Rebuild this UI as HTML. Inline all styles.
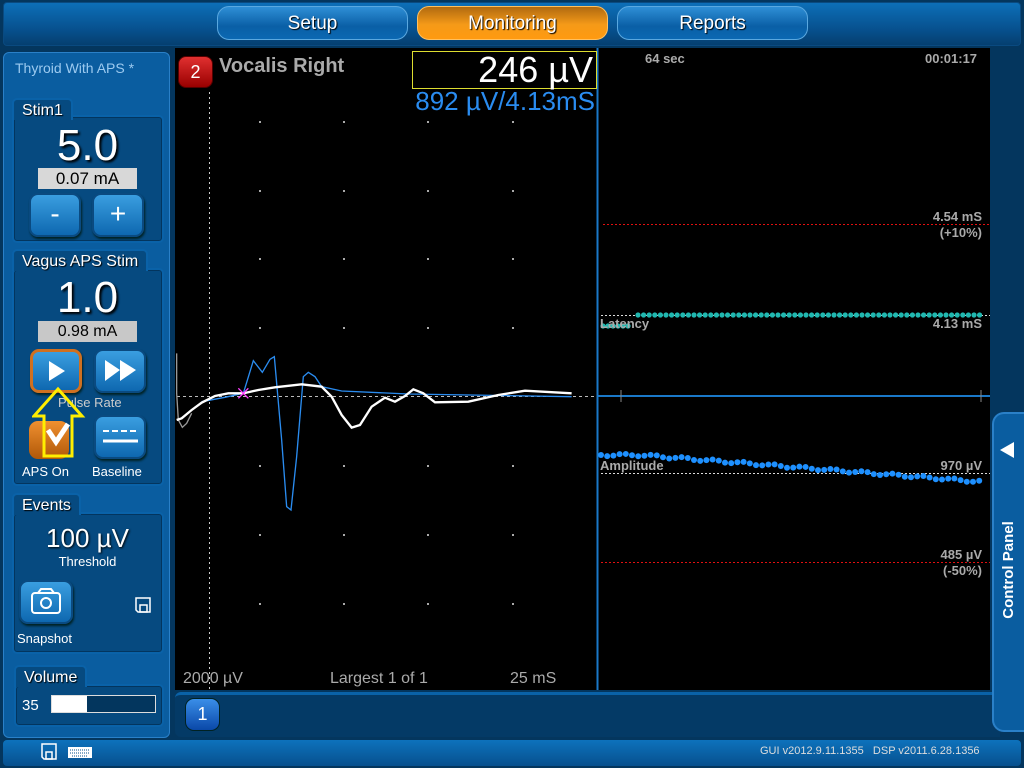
<!DOCTYPE html>
<html><head><meta charset="utf-8"><style>
*{margin:0;padding:0;box-sizing:border-box}
body{width:1024px;height:768px;background:#04365e;font-family:"Liberation Sans",sans-serif;position:relative;overflow:hidden;color:#fff}
.abs{position:absolute}
.topbar{left:3px;top:2px;width:1018px;height:44px;border-radius:4px;background:linear-gradient(#0d6fb8,#075290 60%,#053f70);border:1px solid #0a4a80}
.tab{top:6px;height:34px;width:191px;border-radius:12px;border:1px solid #5aa8e0;background:linear-gradient(#2f8fd6,#0a5fa6 60%,#0b68b2);text-align:center;font-size:19px;line-height:33px;text-shadow:1px 1px 1px #000}
.tab.on{background:linear-gradient(#b06a10,#f59a18 55%,#ff9a10);border-color:#ffc060}
.left{left:3px;top:52px;width:167px;height:686px;border-radius:6px;background:#0a5da0;border:1px solid #2a80c8}
.box{position:absolute;left:8px;width:152px;border-radius:5px;background:#064a80;border:2px solid #0a62a8;box-shadow:inset 0 0 0 1px #03355e}
.lbl{position:absolute;z-index:2;left:8px;height:22px;border-radius:5px 5px 0 0;background:#064a80;border:2px solid #0a62a8;border-bottom:none;font-size:16px;padding:2px 8px;text-shadow:1px 1px 1px #000}
.btn{position:absolute;width:52px;height:44px;border-radius:9px;background:linear-gradient(#3a9ee0,#0e68b0);border:2px solid #0a4a80;box-shadow:1px 2px 2px #022;text-align:center;color:#fff}
.plot{left:175px;top:48px;width:815px;height:642px;background:#000}
.gray{color:#aaa}
</style></head><body>
<div class="abs topbar"></div>
<div class="abs tab" style="left:217px">Setup</div>
<div class="abs tab on" style="left:417px">Monitoring</div>
<div class="abs tab" style="left:617px">Reports</div>

<div class="abs left">
 <div class="abs" style="left:11px;top:7px;font-size:14px;color:#9ccaf0">Thyroid With APS *</div>
 <div class="lbl" style="top:45px">Stim1</div>
 <div class="box" style="top:62px;height:128px"></div>
 <div class="abs" style="left:0;width:167px;top:68px;text-align:center;font-size:44px;text-shadow:2px 2px 2px #000">5.0</div>
 <div class="abs" style="left:34px;top:115px;width:99px;height:21px;background:#d8d8d8;color:#000;text-align:center;font-size:17px;line-height:21px">0.07 mA</div>
 <div class="btn" style="left:25px;top:140px;font-size:28px;line-height:38px">-</div>
 <div class="btn" style="left:88px;top:140px;font-size:28px;line-height:38px">+</div>

 <div class="lbl" style="top:196px">Vagus APS Stim</div>
 <div class="box" style="top:215px;height:218px"></div>
 <div class="abs" style="left:0;width:167px;top:220px;text-align:center;font-size:44px;text-shadow:2px 2px 2px #000">1.0</div>
 <div class="abs" style="left:34px;top:268px;width:99px;height:21px;background:#c8c8c8;color:#000;text-align:center;font-size:16px;line-height:21px">0.98 mA</div>
 <div class="btn" style="left:26px;top:296px;border:3px solid #d07020"><svg width="46" height="38"><polygon points="16,9 16,29 32,19" fill="#fff"/></svg></div>
 <div class="btn" style="left:90px;top:296px"><svg width="48" height="40"><polygon points="9,9 9,30 24,19" fill="#fff"/><polygon points="24,9 24,30 40,19" fill="#fff"/></svg></div>
 <div class="abs gray" style="left:54px;top:342px;font-size:13px;color:#ccc">Pulse Rate</div>
 <div class="abs" style="left:25px;top:368px;width:40px;height:38px;border-radius:9px;background:linear-gradient(#f09030,#b05808)"></div>
 <div class="btn" style="left:90px;top:362px"><svg width="48" height="40"><line x1="7" y1="14" x2="42" y2="14" stroke="#fff" stroke-width="2" stroke-dasharray="6,3"/><line x1="7" y1="24" x2="42" y2="24" stroke="#fff" stroke-width="3"/></svg></div>
 <svg class="abs" style="left:28px;top:333px" width="56" height="72"><polygon points="26,3 50,30 40,30 40,70 12,70 12,30 2,30" fill="none" stroke="#ffee00" stroke-width="3"/><path d="M16,44 L24,56 L36,38" stroke="#fff" stroke-width="5" fill="none"/></svg>
 <div class="abs" style="left:18px;top:411px;font-size:13px">APS On</div>
 <div class="abs" style="left:88px;top:411px;font-size:13px">Baseline</div>

 <div class="lbl" style="top:440px">Events</div>
 <div class="box" style="top:459px;height:142px"></div>
 <div class="abs" style="left:0;width:167px;top:470px;text-align:center;font-size:26px;text-shadow:1px 1px 2px #000">100 µV</div>
 <div class="abs" style="left:0;width:167px;top:501px;text-align:center;font-size:13px">Threshold</div>
 <div class="btn" style="left:15px;top:527px;width:54px;height:44px;border-radius:9px"><svg width="50" height="40"><rect x="11" y="11" width="28" height="20" rx="3" fill="none" stroke="#fff" stroke-width="2"/><path d="M17,11 L20,7 L30,7 L33,11" fill="none" stroke="#fff" stroke-width="2"/><circle cx="25" cy="21" r="5" fill="none" stroke="#fff" stroke-width="2"/></svg></div>
 <svg class="abs" style="left:130px;top:543px" width="20" height="20"><path d="M2,2 L16,2 L16,16 L4,16 L2,14 Z" fill="none" stroke="#fff" stroke-width="1.5"/><rect x="6" y="9" width="7" height="7" fill="none" stroke="#fff" stroke-width="1.5"/></svg>
 <div class="abs" style="left:13px;top:578px;font-size:13px">Snapshot</div>

 <div class="lbl" style="top:612px;left:10px">Volume</div>
 <div class="box" style="top:631px;height:43px;left:10px;width:150px"></div>
 <div class="abs" style="left:18px;top:644px;font-size:15px">35</div>
 <div class="abs" style="left:47px;top:642px;width:105px;height:18px;border:1px solid #ddd;background:#03365e"><div style="width:35px;height:16px;background:#fff"></div></div>
</div>

<div class="abs plot"></div>
<svg class="abs" style="left:0;top:0" width="1024" height="768">
 <g fill="#aaa">
  <rect x="259" y="121" width="2" height="2"/><rect x="259" y="190" width="2" height="2"/><rect x="259" y="258" width="2" height="2"/><rect x="259" y="327" width="2" height="2"/><rect x="259" y="465" width="2" height="2"/><rect x="259" y="534" width="2" height="2"/><rect x="259" y="603" width="2" height="2"/>
  <rect x="343" y="121" width="2" height="2"/><rect x="343" y="190" width="2" height="2"/><rect x="343" y="258" width="2" height="2"/><rect x="343" y="327" width="2" height="2"/><rect x="343" y="465" width="2" height="2"/><rect x="343" y="534" width="2" height="2"/><rect x="343" y="603" width="2" height="2"/>
  <rect x="427" y="121" width="2" height="2"/><rect x="427" y="190" width="2" height="2"/><rect x="427" y="258" width="2" height="2"/><rect x="427" y="327" width="2" height="2"/><rect x="427" y="465" width="2" height="2"/><rect x="427" y="534" width="2" height="2"/><rect x="427" y="603" width="2" height="2"/>
  <rect x="512" y="121" width="2" height="2"/><rect x="512" y="190" width="2" height="2"/><rect x="512" y="258" width="2" height="2"/><rect x="512" y="327" width="2" height="2"/><rect x="512" y="465" width="2" height="2"/><rect x="512" y="534" width="2" height="2"/><rect x="512" y="603" width="2" height="2"/>
 </g>
 <line x1="209.5" y1="92" x2="209.5" y2="690" stroke="#ccc" stroke-dasharray="2,3"/>
 <line x1="177" y1="396.5" x2="597" y2="396.5" stroke="#bbb" stroke-dasharray="3,3"/>
 <line x1="597.5" y1="48" x2="597.5" y2="690" stroke="#1a78c8" stroke-width="2"/>
 <line x1="598" y1="396" x2="990" y2="396" stroke="#1a78c8" stroke-width="2"/>
 <line x1="621" y1="390" x2="621" y2="402" stroke="#888"/><line x1="981" y1="390" x2="981" y2="402" stroke="#888"/>
 <line x1="603" y1="224.5" x2="990" y2="224.5" stroke="#e01010" stroke-dasharray="2,2"/>
 <line x1="601" y1="562.5" x2="990" y2="562.5" stroke="#e01010" stroke-dasharray="2,2"/>
 <line x1="601" y1="315.5" x2="990" y2="315.5" stroke="#ddd" stroke-dasharray="2,2"/>
 <line x1="601" y1="473.5" x2="990" y2="473.5" stroke="#ddd" stroke-dasharray="2,2"/>
 <g transform="translate(175,340) scale(0.3333)">
  <path d="M5,40 L5,160 L10,240 L22,262 L35,250 L50,220" fill="none" stroke="#999" stroke-width="4"/>
  <path d="M80,185 L150,172 L205,160 L235,62 L262,97 L285,58 L298,50 L320,300 L335,500 L348,510 L365,350 L385,110 L400,97 L420,110 L440,140 L500,153 L700,162 L1190,170" fill="none" stroke="#2a8cf0" stroke-width="4"/>
  <path d="M5,240 L20,235 L50,210 L80,188 L120,168 L160,160 L205,160 L250,150 L300,142 L380,133 L440,140 L470,170 L500,225 L530,263 L555,255 L590,200 L630,173 L660,185 L690,168 L715,148 L745,160 L780,187 L880,185 L970,165 L1050,152 L1190,160" fill="none" stroke="#fff" stroke-width="7"/>
  <path d="M190,145 L220,175 M220,145 L190,175" stroke="#ff40ff" stroke-width="4"/>
 </g>
 <g id="lat" fill="#20b8b0"></g>
 <g id="amp" fill="#1e90ff"></g>
</svg>
<div class="abs" style="left:178px;top:56px;width:35px;height:32px;border-radius:8px;background:linear-gradient(#e03030,#900);border:1px solid #500;text-align:center;font-size:18px;line-height:30px">2</div>
<div class="abs" style="left:219px;top:55px;font-size:20px;font-weight:bold;color:#aaa">Vocalis Right</div>
<div class="abs" style="left:412px;top:51px;width:185px;height:38px;border:1px solid #dddd30;text-align:right;padding-right:3px;font-size:36px;line-height:36px">246 µV</div>
<div class="abs" style="left:340px;top:86px;width:255px;text-align:right;font-size:26px;color:#2a8cf0">892 µV/4.13mS</div>
<div class="abs gray" style="left:645px;top:51px;font-size:13px;font-weight:bold">64 sec</div>
<div class="abs gray" style="left:925px;top:51px;font-size:13px;font-weight:bold">00:01:17</div>
<div class="abs gray" style="left:900px;top:209px;width:82px;text-align:right;font-size:13px;line-height:16px;font-weight:bold">4.54 mS<br>(+10%)</div>
<div class="abs gray" style="left:900px;top:316px;width:82px;text-align:right;font-size:13px;font-weight:bold">4.13 mS</div>
<div class="abs gray" style="left:600px;top:316px;font-size:13px;font-weight:bold">Latency</div>
<div class="abs gray" style="left:600px;top:458px;font-size:13px;font-weight:bold">Amplitude</div>
<div class="abs gray" style="left:900px;top:458px;width:82px;text-align:right;font-size:13px;font-weight:bold">970 µV</div>
<div class="abs gray" style="left:900px;top:547px;width:82px;text-align:right;font-size:13px;line-height:16px;font-weight:bold">485 µV<br>(-50%)</div>
<div class="abs gray" style="left:183px;top:670px;font-size:16px">2000 µV</div>
<div class="abs gray" style="left:330px;top:670px;font-size:16px">Largest 1 of 1</div>
<div class="abs gray" style="left:510px;top:670px;font-size:16px">25 mS</div>

<div class="abs" style="left:175px;top:692px;width:825px;height:45px;background:#043a66;border-top:3px solid #0a62a8;border-radius:6px 0 0 6px"></div>
<div class="abs" style="left:185px;top:698px;width:35px;height:33px;border-radius:9px;background:linear-gradient(#3a8ee8,#0a48a8);border:1px solid #022;text-align:center;font-size:18px;line-height:31px">1</div>
<div class="abs" style="left:992px;top:412px;width:32px;height:320px;background:#0a5da0;border:2px solid #2a80c8;border-right:none;border-radius:12px 0 0 12px"></div>
<svg class="abs" style="left:998px;top:440px" width="20" height="20"><polygon points="16,2 16,18 2,10" fill="#fff"/></svg>
<div class="abs" style="left:994px;top:560px;width:30px;height:20px;transform:rotate(-90deg);transform-origin:center;white-space:nowrap;font-size:15px;font-weight:bold;display:flex;justify-content:center;line-height:20px"><span>Control Panel</span></div>

<div class="abs" style="left:3px;top:740px;width:1018px;height:26px;border-radius:4px;background:linear-gradient(#0d72bc,#07508e)"></div>
<svg class="abs" style="left:40px;top:742px" width="60" height="20"><path d="M2,2 L16,2 L16,17 L4,17 L2,15 Z" fill="none" stroke="#fff" stroke-width="1.5"/><rect x="6" y="10" width="6" height="7" fill="none" stroke="#fff" stroke-width="1.5"/><rect x="28" y="5" width="24" height="11" fill="#fff"/><path d="M30,8 H50 M30,11 H50 M32,14 H48" stroke="#05508e" stroke-dasharray="1,1"/></svg>
<div class="abs" style="left:760px;top:745px;font-size:11px;color:#ddd;white-space:nowrap">GUI v2012.9.11.1355 &nbsp; DSP v2011.6.28.1356</div>
<script>
var ns="http://www.w3.org/2000/svg";
var lat=document.getElementById("lat"),amp=document.getElementById("amp");
for(var x=603;x<=632;x+=5){var c=document.createElementNS(ns,"circle");c.setAttribute("cx",x);c.setAttribute("cy",326);c.setAttribute("r",2.6);lat.appendChild(c);}
for(var x=638;x<=983;x+=5.6){var c=document.createElementNS(ns,"circle");c.setAttribute("cx",x);c.setAttribute("cy",315);c.setAttribute("r",2.6);lat.appendChild(c);}
var i=0;
for(var x=601;x<=984;x+=6.2){var y=455+Math.max(0,x-640)/344*27+Math.sin(i*1.3)*1.2;var c=document.createElementNS(ns,"circle");c.setAttribute("cx",x);c.setAttribute("cy",y);c.setAttribute("r",3);amp.appendChild(c);i++;}
</script>
</body></html>
